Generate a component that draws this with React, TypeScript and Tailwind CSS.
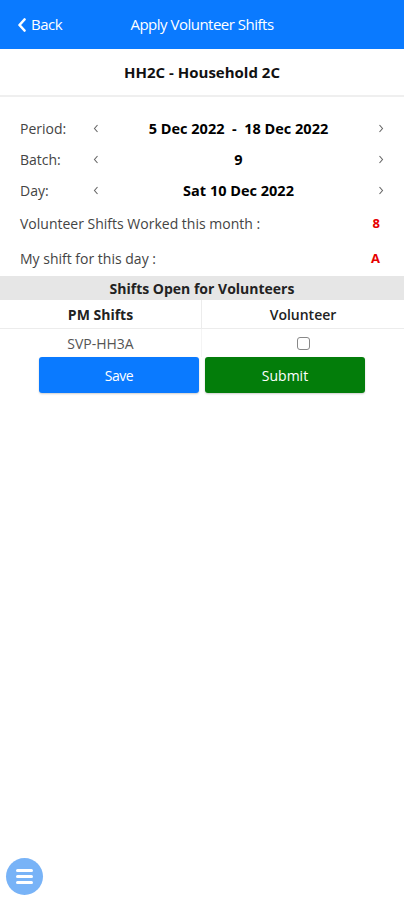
import { useState } from "react";

const font = { fontFamily: '"Open Sans", "Noto Sans", sans-serif' };

function Chevron({ dir }: { dir: "left" | "right" }) {
  return (
    <svg width="6" height="9" viewBox="0 0 6 9">
      <path
        d={dir === "left" ? "M4.5 1 L1.5 4.5 L4.5 8" : "M1.5 1 L4.5 4.5 L1.5 8"}
        stroke="#666"
        strokeWidth="1.1"
        fill="none"
      />
    </svg>
  );
}

function NavRow({ label, value }: { label: string; value: string }) {
  return (
    <div className="flex items-center h-[31px] px-5 text-[14px]">
      <span className="w-[73px] text-[#444]">{label}</span>
      <Chevron dir="left" />
      <span className="flex-1 text-center font-bold text-black whitespace-pre text-[14.5px]">{value}</span>
      <Chevron dir="right" />
    </div>
  );
}

export default function App() {
  const [checked, setChecked] = useState(false);

  return (
    <div className="w-[404px] h-[900px] bg-white relative overflow-hidden" style={font}>
      {/* Header */}
      <div className="h-[49px] bg-[#0a7aff] flex items-center relative text-white">
        <div className="absolute left-[17px] flex items-center gap-1 text-[15px] tracking-[-0.5px]">
          <svg width="10" height="14" viewBox="0 0 10 14">
            <path d="M7.5 1.5 L2.5 7 L7.5 12.5" stroke="white" strokeWidth="2.6" fill="none" strokeLinecap="round" strokeLinejoin="round" />
          </svg>
          <span>Back</span>
        </div>
        <div className="flex-1 text-center text-[15px] tracking-[-0.5px]">Apply Volunteer Shifts</div>
      </div>

      {/* Household */}
      <div className="h-[48px] flex items-center justify-center font-bold text-[15px] text-[#111] border-b-2 border-[#efefef]">
        HH2C - Household 2C
      </div>

      <div className="pt-[16px]">
        <NavRow label="Period:" value="5 Dec 2022  -  18 Dec 2022" />
        <NavRow label="Batch:" value="9" />
        <NavRow label="Day:" value="Sat 10 Dec 2022" />
        <div className="flex items-center justify-between h-[35px] px-5 pr-[24px] text-[14px] text-[#444]">
          <span>Volunteer Shifts Worked this month :</span>
          <span className="text-[#e60000] font-bold text-[13px]">8</span>
        </div>
        <div className="flex items-center justify-between h-[35px] px-5 pr-[24px] text-[14px] text-[#444]">
          <span>My shift for this day :</span>
          <span className="text-[#e60000] font-bold text-[13px]">A</span>
        </div>
      </div>

      {/* Shifts table */}
      <div>
        <div className="h-[24px] bg-[#e6e6e6] flex items-center justify-center font-bold text-[14px] text-[#222]">
          Shifts Open for Volunteers
        </div>
        <div className="grid grid-cols-2 border-b border-[#ececec]">
          <div className="h-[28px] flex items-center justify-center font-bold text-[14px] text-[#222] border-r border-[#ececec]">PM Shifts</div>
          <div className="h-[28px] flex items-center justify-center font-semibold text-[14px] text-[#222]">Volunteer</div>
        </div>
        <div className="grid grid-cols-2">
          <div className="h-[28px] flex items-center justify-center text-[14px] text-[#555] border-r border-[#f4f4f4]">SVP-HH3A</div>
          <div className="h-[28px] flex items-center justify-center">
            <input
              type="checkbox"
              checked={checked}
              onChange={() => setChecked(!checked)}
              className="w-[13px] h-[13px] appearance-none border border-[#888] rounded-[3px] bg-white checked:bg-[#0a7aff]"
            />
          </div>
        </div>
        <div className="flex justify-center gap-[6px]">
          <button className="w-[160px] h-[36px] bg-[#0a7aff] text-white text-[14px] rounded-[3px] tracking-[-0.5px] shadow-[0_1px_2px_rgba(0,0,0,0.2)]">
            Save
          </button>
          <button className="w-[160px] h-[36px] bg-[#037d0a] text-white text-[14px] rounded-[3px] shadow-[0_1px_2px_rgba(0,0,0,0.2)]">
            Submit
          </button>
        </div>
      </div>

      {/* Floating menu button */}
      <button className="absolute left-[6px] top-[858px] w-[37px] h-[37px] rounded-full bg-[#78b3f7] flex flex-col items-center justify-center gap-[3px]">
        <span className="block w-[17px] h-[3px] rounded-full bg-white" />
        <span className="block w-[17px] h-[3px] rounded-full bg-white" />
        <span className="block w-[17px] h-[3px] rounded-full bg-white" />
      </button>
    </div>
  );
}
